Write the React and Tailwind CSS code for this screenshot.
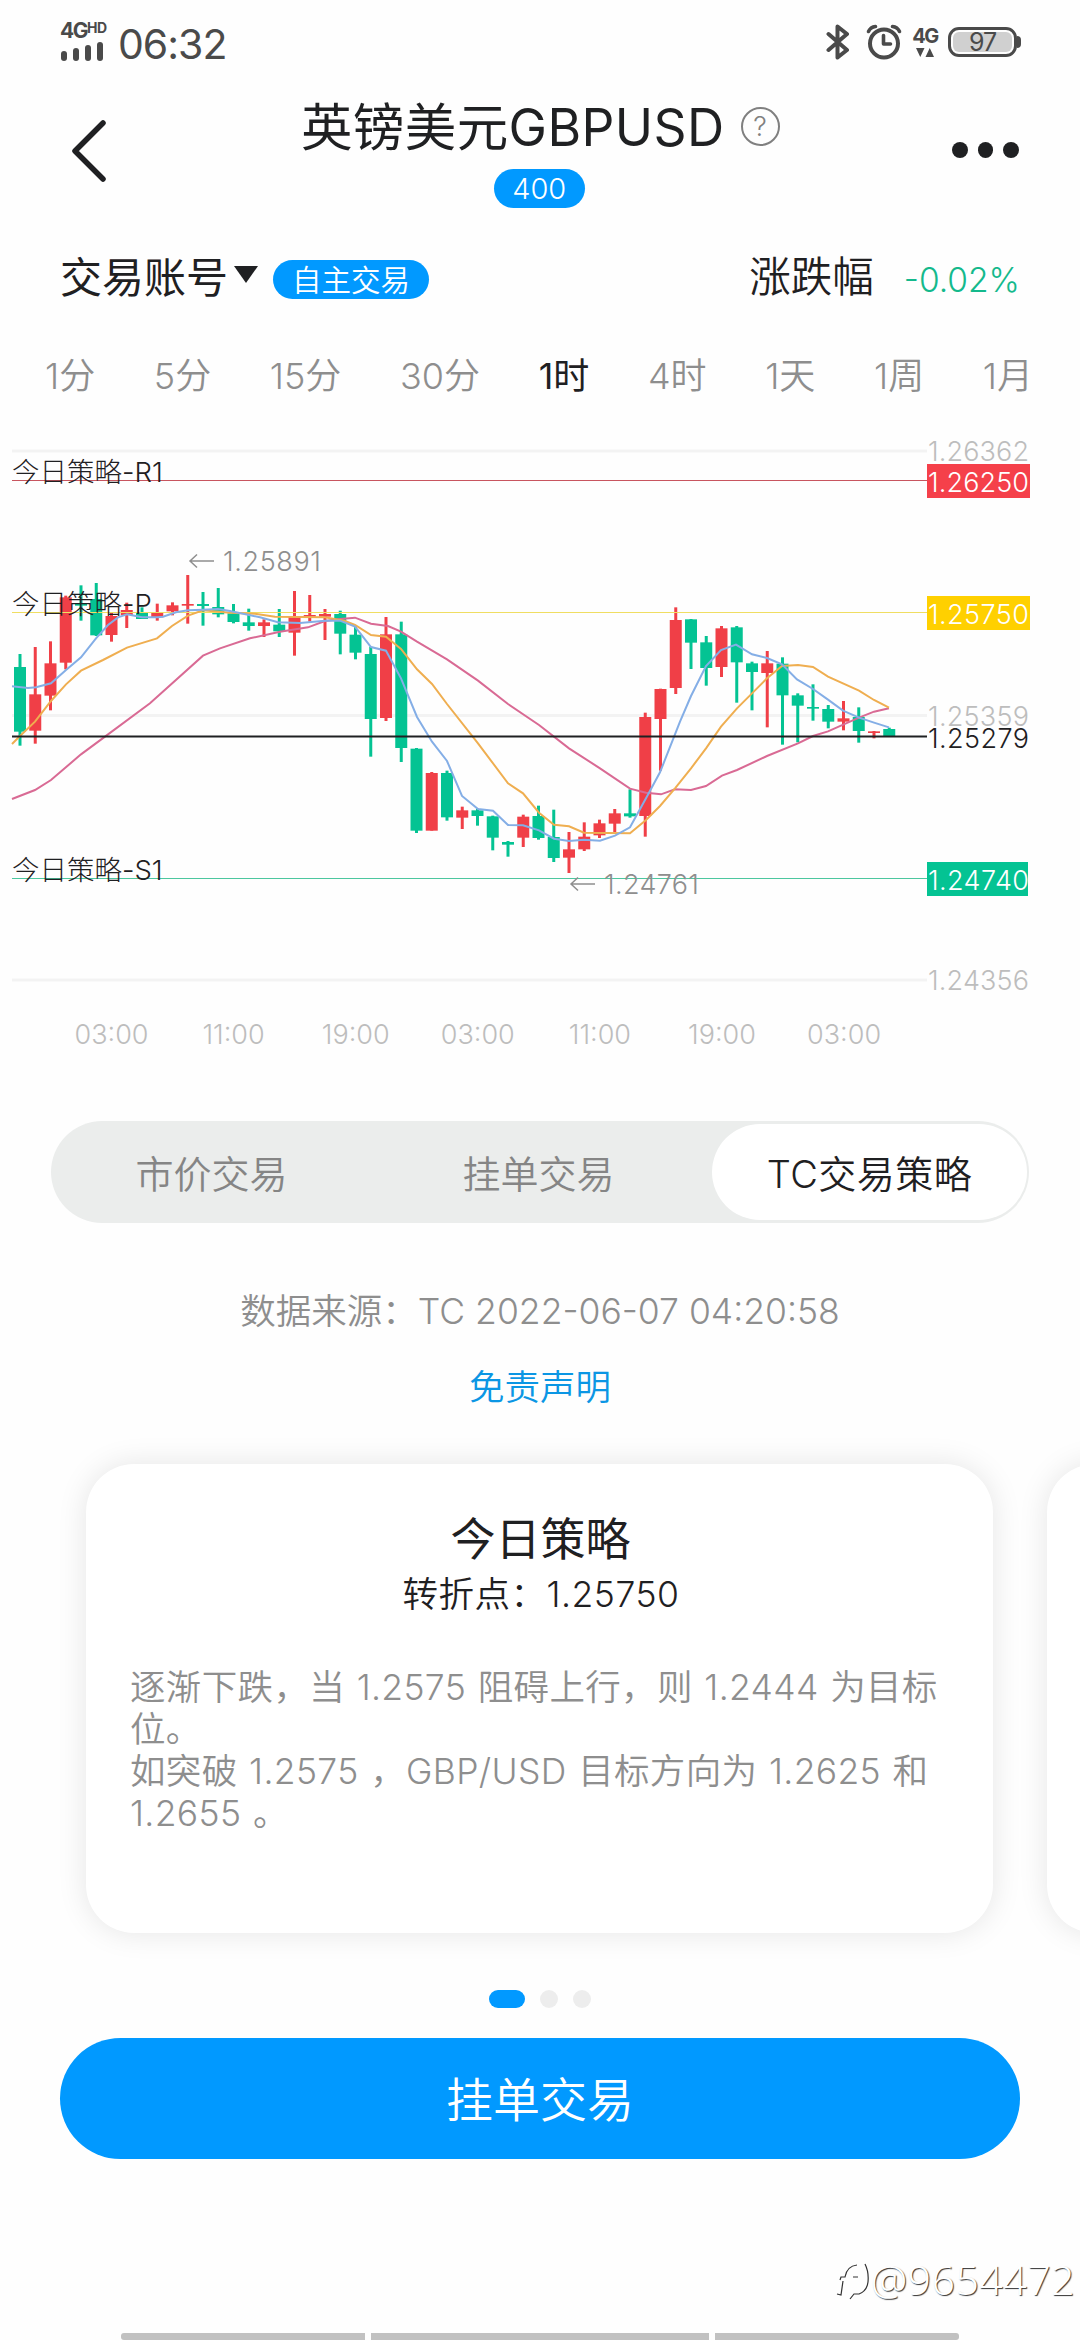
const RED = '#f03f47'
const GREEN = '#04c393'

const periods = ['1分', '5分', '15分', '30分', '1时', '4时', '1天', '1周', '1月']

// [direction, high, body top, body bottom, low], thirds of a pixel from the chart top
const candles = [
  ['d', 702, 741, 935, 977], ['u', 681, 823, 932, 971], ['u', 664, 730, 827, 871], ['u', 527, 532, 728, 748],
  ['d', 496, 552, 557, 602], ['d', 489, 537, 646, 648], ['u', 578, 588, 645, 665], ['u', 548, 570, 585, 624],
  ['d', 562, 577, 597, 597], ['u', 551, 577, 592, 602], ['u', 547, 556, 574, 586], ['u', 465, 552, 557, 611],
  ['d', 516, 552, 558, 617], ['d', 504, 561, 583, 592], ['d', 552, 580, 606, 610], ['d', 566, 607, 618, 632],
  ['u', 598, 607, 618, 651], ['d', 567, 614, 634, 651], ['u', 513, 590, 638, 707], ['u', 525, 585, 590, 605],
  ['u', 567, 582, 590, 660], ['d', 572, 582, 641, 703], ['d', 620, 644, 698, 718], ['d', 680, 702, 897, 1010],
  ['u', 591, 643, 894, 903], ['d', 605, 643, 984, 1026], ['d', 984, 986, 1232, 1239], ['u', 1056, 1059, 1232, 1232],
  ['d', 1052, 1059, 1192, 1202], ['u', 1160, 1171, 1193, 1227], ['d', 1166, 1171, 1188, 1217], ['d', 1187, 1189, 1253, 1291],
  ['d', 1263, 1266, 1274, 1310], ['u', 1184, 1190, 1253, 1281], ['d', 1157, 1188, 1254, 1259], ['d', 1169, 1251, 1314, 1326],
  ['u', 1236, 1288, 1313, 1359], ['u', 1207, 1250, 1288, 1293], ['u', 1199, 1210, 1246, 1254], ['u', 1167, 1180, 1211, 1236],
  ['d', 1108, 1180, 1189, 1193], ['u', 878, 891, 1188, 1250], ['u', 806, 807, 897, 1052], ['u', 562, 600, 804, 822],
  ['d', 597, 598, 668, 747], ['d', 648, 667, 744, 797], ['u', 618, 625, 741, 771], ['d', 618, 622, 727, 848],
  ['d', 725, 730, 756, 871], ['u', 693, 730, 759, 922], ['d', 712, 731, 826, 974], ['d', 820, 826, 857, 967],
  ['d', 793, 861, 866, 902], ['d', 855, 867, 905, 925], ['u', 843, 895, 905, 931], ['d', 862, 891, 933, 968],
  ['u', 933, 934, 939, 955], ['d', 923, 927, 948, 948],
]

const averages = [
  {
    color: '#d96a94',
    points: [[12, 1137], [35, 1110], [51, 1080], [81, 1003], [105, 950], [150, 850], [203, 707], [220, 685], [250, 655], [280, 635], [308, 622], [325, 603], [340, 597], [355, 593], [371, 611], [388, 618], [401, 635], [417, 665], [447, 718], [478, 782], [508, 852], [539, 915], [569, 985], [600, 1045], [630, 1106], [646, 1118], [661, 1123], [675, 1108], [691, 1110], [706, 1098], [722, 1067], [737, 1050], [767, 1008], [798, 970], [813, 948], [828, 934], [859, 893], [874, 875], [889, 865]],
  },
  {
    color: '#efae50',
    points: [[12, 972], [20, 948], [35, 905], [51, 843], [66, 793], [81, 752], [103, 720], [127, 683], [157, 655], [172, 618], [188, 587], [203, 571], [230, 578], [255, 581], [275, 590], [300, 591], [325, 592], [345, 603], [355, 615], [371, 645], [386, 650], [401, 687], [417, 748], [432, 792], [447, 852], [478, 970], [508, 1090], [523, 1120], [539, 1178], [554, 1214], [569, 1219], [584, 1238], [630, 1240], [646, 1200], [660, 1158], [675, 1105], [691, 1045], [706, 985], [721, 920], [737, 865], [752, 820], [767, 775], [782, 738], [798, 735], [813, 741], [828, 770], [859, 812], [874, 840], [889, 863]],
  },
  {
    color: '#84aee6',
    points: [[12, 799], [28, 804], [36, 802], [51, 790], [66, 750], [81, 712], [96, 655], [108, 615], [118, 592], [127, 583], [142, 592], [157, 592], [163, 590], [176, 577], [188, 571], [203, 569], [218, 567], [230, 573], [260, 592], [278, 607], [300, 609], [325, 602], [340, 602], [355, 620], [371, 681], [386, 692], [401, 775], [417, 891], [432, 965], [447, 1023], [462, 1128], [478, 1167], [493, 1172], [508, 1215], [523, 1216], [539, 1231], [554, 1256], [569, 1263], [584, 1259], [600, 1262], [615, 1247], [630, 1222], [646, 1135], [660, 1057], [680, 905], [691, 828], [706, 738], [721, 690], [736, 674], [752, 703], [767, 714], [782, 733], [797, 778], [813, 807], [828, 839], [843, 872], [859, 893], [874, 908], [889, 922]],
  },
]

const levels = [
  { name: '今日策略-R1', price: '1.26250', y: 60.5, line: '#c8555f', fill: '#f5404a', width: 103 },
  { name: '今日策略-P', price: '1.25750', y: 192.5, line: '#f0de62', fill: '#ffd000', width: 103 },
  { name: '今日策略-S1', price: '1.24740', y: 458.5, line: '#4cc79f', fill: '#04c393', width: 101 },
]

const gridLines = [
  { price: '1.26362', y: 31 },
  { price: '1.25359', y: 295.5 },
  { price: '1.24356', y: 560 },
]

const times = ['03:00', '11:00', '19:00', '03:00', '11:00', '19:00', '03:00']

function StatusBar() {
  return (
    <div className="flex h-[84px] items-center justify-between pl-[60px] pr-[59px] text-[#4a4a4a]">
      <div className="flex items-center gap-[12px]">
        <div className="flex w-[46px] flex-col gap-[1px]">
          <div className="flex h-[16px] items-start leading-none font-bold">
            <span className="text-[21px] leading-[13px] tracking-[-1.5px]">4G</span>
            <span className="text-[14px] leading-[7px] tracking-[-0.5px]">HD</span>
          </div>
          <div className="flex h-[20px] items-end gap-[6px] pl-[1px]">
            <i className="h-[10px] w-[6px] rounded-full bg-[#4a4a4a]" />
            <i className="h-[13px] w-[6px] rounded-full bg-[#4a4a4a]" />
            <i className="h-[16px] w-[6px] rounded-full bg-[#4a4a4a]" />
            <i className="h-[19px] w-[6px] rounded-full bg-[#4a4a4a]" />
          </div>
        </div>
        <span className="pt-[5px] text-[41px] leading-none tracking-[-1px]">06:32</span>
      </div>

      <div className="flex items-center">
        <svg width="24" height="38" viewBox="0 0 24 38" fill="none" stroke="#4a4a4a" strokeWidth="4" strokeLinejoin="round" strokeLinecap="round">
          <path d="M2.500 11 21 27 11.500 34.500V3.500L21 11 2.500 27" />
        </svg>
        <svg className="ml-[16px]" width="36" height="38" viewBox="0 0 36 38" fill="none" stroke="#4a4a4a" strokeLinecap="round">
          <circle cx="18" cy="20.5" r="14" strokeWidth="4" />
          <path d="M17.500 12.500v8.500h7" strokeWidth="3.6" strokeLinejoin="round" />
          <path d="M2.500 8.500Q4.500 4 9.500 3.500M33.500 8.500Q31.500 4 26.500 3.500" strokeWidth="3.6" />
        </svg>
        <div className="ml-[10px] flex w-[26px] flex-col items-center">
          <span className="text-[20px] leading-[18px] font-bold tracking-[-1.5px]">4G</span>
          <svg className="mt-[3px]" width="18" height="9" viewBox="0 0 18 9" fill="#4a4a4a">
            <path d="M0 0h8.500L4.250 9zM9.500 9h8.500L13.750 0z" />
          </svg>
        </div>
        <div className="ml-[10px] flex items-center">
          <div className="h-[30px] w-[69px] rounded-[11px] border-[3px] border-[#4a4a4a] p-[2px]">
            <div className="flex h-full items-center justify-center rounded-[6px] bg-[#d0d0d0] text-[25px] leading-none tracking-[-1px]">97</div>
          </div>
          <i className="h-[12px] w-[4px] rounded-r-full bg-[#4a4a4a]" />
        </div>
      </div>
    </div>
  )
}

function Header() {
  return (
    <header className="flex h-[146px] justify-between pl-[70px] pr-[61px]">
      <svg className="mt-[34px]" width="40" height="66" viewBox="0 0 40 66" fill="none" stroke="#1f2022" strokeWidth="5.5" strokeLinecap="round" strokeLinejoin="round">
        <path d="M33 5 5 33l28 28" />
      </svg>
      <div className="flex flex-col items-center pl-[18px] text-[#1f2022]">
        <div className="flex h-[85px] items-center gap-[16px]">
          <h1 className="pt-[2px] text-[51.5px] leading-none tracking-[0.4px]">英镑美元GBPUSD</h1>
          <span className="flex size-[39px] items-center justify-center rounded-full border-2 border-[#808080] text-[27px] leading-none font-light text-[#808080]">?</span>
        </div>
        <span className="mr-[2px] flex h-[39px] w-[91px] items-center justify-center rounded-full bg-[#0199ff] text-[29px] leading-none font-[350] text-white">400</span>
      </div>
      <div className="mt-[58px] flex gap-[10px]">
        <i className="size-[15.5px] rounded-full bg-[#1f2022]" />
        <i className="size-[15.5px] rounded-full bg-[#1f2022]" />
        <i className="size-[15.5px] rounded-full bg-[#1f2022]" />
      </div>
    </header>
  )
}

function AccountRow() {
  return (
    <div className="flex h-[96px] items-center pl-[60px] pr-[60px] text-[#1f2022]">
      <span className="text-[42px] leading-none">交易账号</span>
      <svg className="mb-[7px] ml-[6px]" width="24" height="17" viewBox="0 0 24 17">
        <path d="M0 0h24L12 17z" fill="#1f2022" />
      </svg>
      <span className="ml-[15px] mt-[3px] flex h-[39px] w-[156px] items-center justify-center rounded-full bg-[#0199ff] pt-[2px] text-[29.5px] leading-none font-[350] text-white">自主交易</span>
      <span className="ml-auto text-[41.5px] leading-none font-[350]">涨跌幅</span>
      <span className="ml-[30px] mt-[5px] text-[33.5px] leading-none font-[350] text-[#14b98c]">-0.02%</span>
    </div>
  )
}

function Periods() {
  return (
    <nav className="flex h-[94px] items-center justify-between pt-[6px] pl-[45px] pr-[47px] text-[36px] leading-none">
      {periods.map((period) => (
        <button key={period} className={period === '1时' ? 'text-[#1f2022]' : 'font-[350] text-[#8e8e8e]'}>
          {period}
        </button>
      ))}
    </nav>
  )
}

function Chart() {
  return (
    <svg className="block" width="1080" height="650" viewBox="0 0 1080 650" fontSize="27" fontWeight="300">
      {gridLines.map((g) => (
        <g key={g.price}>
          <path d={`M12 ${g.y}H927`} stroke="#f3f3f3" strokeWidth="3" />
          <text x="928" y={g.y + 10} fill="#bdbdbd" textLength="101">{g.price}</text>
        </g>
      ))}

      {candles.map(([dir, high, top, bottom, low], i) => {
        const x = 20 + i * 15.25
        const color = dir === 'u' ? RED : GREEN
        return (
          <g key={i} fill={color}>
            <rect x={x - 1.5} y={high / 3} width="3" height={(low - high) / 3} />
            <rect x={x - 6} y={top / 3} width="12" height={Math.max(bottom - top, 4) / 3} />
          </g>
        )
      })}

      {levels.map((l) => (
        <g key={l.name}>
          <path d={`M12 ${l.y}H927`} stroke={l.line} />
          <text x="12" y={l.y + 1} fill="#1f2022" fontSize="27.5">{l.name}</text>
          <rect x="927" y={l.y - 16.5} width={l.width} height="34" fill={l.fill} />
          <text x="928" y={l.y + 11.5} fill="#fff" textLength="101">{l.price}</text>
        </g>
      ))}

      {averages.map((a) => (
        <polyline key={a.color} points={a.points.map(([x, y]) => `${x},${y / 3}`).join(' ')} fill="none" stroke={a.color} strokeWidth="2" />
      ))}

      <path d="M12 316.500H927" stroke="#1f2022" strokeWidth="2" />
      <text x="928" y="328" fill="#1f2022" textLength="101">1.25279</text>

      <g fill="none" stroke="#8e8e8e" strokeWidth="1.5">
        <path d="M214 141H190M197 134.500 190 141l7 6.500" />
        <path d="M595 464H571M578 457.500 571 464l7 6.500" />
      </g>
      <text x="223" y="151" fill="#8e8e8e" textLength="98">1.25891</text>
      <text x="604" y="474" fill="#8e8e8e" textLength="95">1.24761</text>

      {times.map((t, i) => (
        <text key={i} x={111.5 + i * 122.1} y="624" fill="#bdbdbd" textAnchor="middle">{t}</text>
      ))}
    </svg>
  )
}

function TradeTabs() {
  return (
    <div className="mx-[51px] mt-[51px] flex h-[102px] rounded-full bg-[#ebedec] px-[2px] py-[3px] text-[38px] leading-none font-[350] text-[#858585]">
      <button className="w-[317px] pt-[3px]">市价交易</button>
      <button className="flex-1 pt-[3px] pr-[5px]">挂单交易</button>
      <button className="w-[315px] rounded-full bg-white pt-[3px] tracking-[0.5px] text-[#1f2022]">TC交易策略</button>
    </div>
  )
}

function StrategyCards() {
  return (
    <div className="flex overflow-hidden pt-[53px] pb-[57px] pl-[86px]">
      <article className="h-[469px] w-[907px] shrink-0 rounded-[48px] bg-white px-[44px] pt-[51px] shadow-[0_0_30px_rgba(0,0,0,0.1)]">
        <h2 className="pl-[2px] text-center text-[45px] leading-[50px] text-[#1f2022]">今日策略</h2>
        <p className="mt-[7px] pl-[3px] text-center text-[35.5px] leading-[46px] font-[350] tracking-[0.5px] text-[#1f2022]">转折点：1.25750</p>
        <p className="mt-[49px] text-[35.5px] leading-[42px] font-[350] tracking-[0.35px] whitespace-nowrap text-[#8e8e8e] [word-spacing:1.2px]">
          逐渐下跌，当 1.2575 阻碍上行，则 1.2444 为目标
          <br />
          位。
          <br />
          如突破 1.2575 ，GBP/USD 目标方向为 1.2625 和
          <br />
          1.2655 。
        </p>
      </article>
      <article className="ml-[54px] h-[469px] w-[907px] shrink-0 rounded-[48px] bg-white shadow-[0_0_30px_rgba(0,0,0,0.1)]" />
    </div>
  )
}

function Watermark() {
  return (
    <div className="absolute right-[5px] bottom-[38px] flex items-center">
      <svg className="mt-[3px]" width="36" height="42" viewBox="0 0 36 42" fill="none" stroke="#333" strokeWidth="1.2">
        <path d="M2 34 6 35 8 21M5 20 6 17 10 17Q12 6 22 5M30 4Q34 12 33 22 32 31 24 34L19 34 15 39M18 17h5" />
      </svg>
      <span className="font-['Noto_Sans'] text-[41px] leading-none font-light tracking-[0.5px] text-white [text-shadow:1px_1px_1px_#333]">@9654472</span>
    </div>
  )
}

export default function App() {
  return (
    <main className="relative h-[2340px] w-[1080px] overflow-hidden bg-[#fefefe] font-['Inter','Noto_Sans_CJK_SC',sans-serif]">
      <StatusBar />
      <Header />
      <AccountRow />
      <Periods />
      <Chart />
      <TradeTabs />

      <p className="mt-[66px] text-center text-[35.5px] leading-[46px] font-[350] text-[#8e8e8e]">数据来源：TC 2022-06-07 04:20:58</p>
      <p className="mt-[30px] text-center text-[35.5px] leading-[46px] font-[350] text-[#0b96e4]">免责声明</p>

      <StrategyCards />

      <div className="flex justify-center gap-[15px]">
        <i className="h-[18px] w-[36px] rounded-full bg-[#0199ff]" />
        <i className="size-[18px] rounded-full bg-[#ededed]" />
        <i className="size-[18px] rounded-full bg-[#ededed]" />
      </div>

      <button className="mx-[60px] mt-[30px] block h-[121px] w-[960px] rounded-full bg-[#0199ff] pt-[2px] text-[47px] leading-none font-[350] text-white">
        挂单交易
      </button>

      <div className="mx-[121px] mt-[174px] flex h-[7px] gap-[6px]">
        <i className="w-[244px] rounded-l-[3px] bg-[#c1c1c1]" />
        <i className="flex-1 bg-[#c1c1c1]" />
        <i className="w-[244px] rounded-r-[3px] bg-[#c1c1c1]" />
      </div>

      <Watermark />
    </main>
  )
}
